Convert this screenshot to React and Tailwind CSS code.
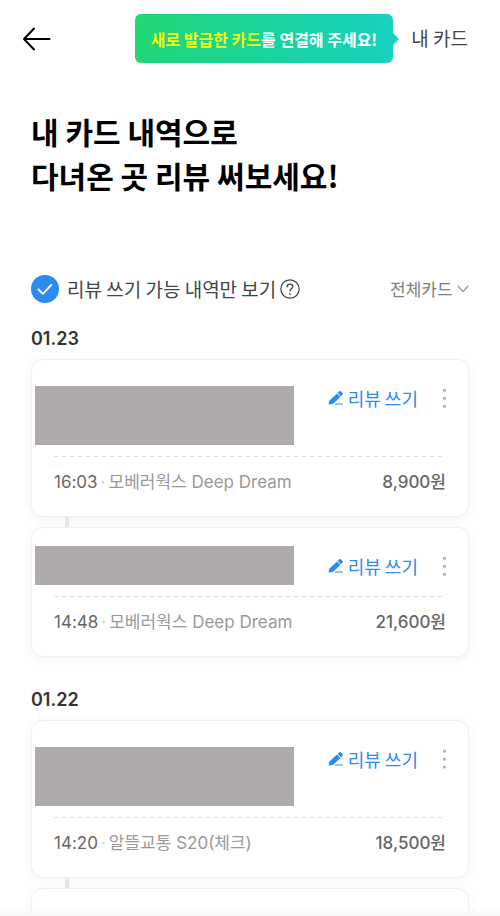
const groups = [
  {
    date: '01.23',
    items: [
      { time: '16:03', source: '모베러웍스 Deep Dream', amount: '8,900', tall: true },
      { time: '14:48', source: '모베러웍스 Deep Dream', amount: '21,600', tall: false },
    ],
  },
  {
    date: '01.22',
    items: [
      { time: '14:20', source: '알뜰교통 S20(체크)', amount: '18,500', tall: true },
      { time: '', source: '', amount: '', tall: true },
    ],
  },
];

const Header = () => (
  <header className="flex items-center justify-between pt-[14px] pl-[22px] pr-8">
    <button type="button" aria-label="뒤로" className="p-0">
      <svg width="29" height="24" viewBox="0 0 29 24" fill="none" stroke="#000" strokeWidth="2" strokeLinecap="round" strokeLinejoin="round">
        <path d="M27.5 12H2M12 1.5L2 12l10 10.5" />
      </svg>
    </button>
    <div className="flex items-center">
      <p className="flex h-[49px] items-center rounded-md bg-linear-to-r from-[#21d673] to-[#17d1bf] px-4 text-[16px] font-bold text-white">
        <span><span className="text-[#f3fb12]">새로 발급한 카드</span>를 연결해 주세요!</span>
      </p>
      <svg width="6" height="12" viewBox="0 0 6 12" fill="#17cfd0">
        <path d="M0 0l6 6-6 6z" />
      </svg>
      <a href="#cards" className="ml-3 text-[19px] text-[#444]">내 카드</a>
    </div>
  </header>
);

const Filters = () => (
  <div className="mt-[78px] flex items-center justify-between">
    <div className="flex items-center">
      <label className="flex items-center gap-2 text-[19px] leading-7 text-[#444]">
        <span className="relative flex size-7">
          <input type="checkbox" defaultChecked className="size-7 appearance-none rounded-full bg-[#ccc] checked:bg-[#2b8cee]" />
          <svg className="pointer-events-none absolute inset-0" width="28" height="28" viewBox="0 0 28 28" fill="none" stroke="#fff" strokeWidth="2" strokeLinecap="round" strokeLinejoin="round">
            <path d="M7.5 14.5l4.4 4.4 8.4-9" />
          </svg>
        </span>
        리뷰 쓰기 가능 내역만 보기
      </label>
      <button type="button" aria-label="도움말" className="ml-1">
        <svg width="20" height="20" viewBox="0 0 20 20" fill="none" stroke="#444" strokeLinecap="round">
          <circle cx="10" cy="10" r="9.2" strokeWidth="1.2" />
          <path d="M7.2 7.8c0-1.7 1.2-2.7 2.8-2.7s2.8 1 2.8 2.5c0 2.1-2.8 2.2-2.8 4.5" strokeWidth="1.4" />
          <circle cx="10" cy="14.9" r="0.9" fill="#444" stroke="none" />
        </svg>
      </button>
    </div>
    <div className="flex items-center gap-1">
      <select aria-label="카드 선택" className="appearance-none bg-transparent text-[17px] text-[#808080]">
        <option>전체카드</option>
      </select>
      <svg className="pointer-events-none" width="12" height="8" viewBox="0 0 12 8" fill="none" stroke="#999" strokeWidth="1.2" strokeLinecap="round">
        <path d="M1 1l5 5.5L11 1" />
      </svg>
    </div>
  </div>
);

const PencilIcon = () => (
  <svg width="16" height="16" viewBox="0 0 16 16" fill="#2b8cee">
    <path d="M1.2 14.6c-.4 0-.6-.3-.5-.6l.4-2.7c0-.3.2-.6.4-.8L8.9 3.6l3.5 3.5-6.9 6.5c-.3.3-.6.5-1 .5z" />
    <path d="M9.6 2.9l1.2-1.2c.8-.8 1.8-.8 2.6 0l.8.8c.8.8.8 1.8 0 2.6L13 6.4z" />
    <path d="M7.5 13.6H15v1H6.5z" />
  </svg>
);

const HistoryCard = ({ item }) => (
  <article className="rounded-xl border border-[#ecf0f1] bg-white shadow-[0_2px_10px_rgba(30,60,60,0.06)]">
    <div className={`flex items-start justify-between pl-[3px] pr-5 ${item.tall ? 'h-24 pt-[26px]' : 'h-[68px] pt-[18px]'}`}>
      {item.time ? (
        <>
          <div className={`w-[259px] bg-[#afabaa] ${item.tall ? 'h-[59px]' : 'h-[39px]'}`} />
          <div className={`flex items-center gap-6 ${item.tall ? '' : 'mt-2'}`}>
            <button type="button" className="flex items-center gap-1 text-[18px] leading-6 text-[#2b8cee]">
              <PencilIcon />
              리뷰 쓰기
            </button>
            <button type="button" aria-label="더보기">
              <svg width="6" height="20" viewBox="0 0 6 20" fill="#b5b5b5">
                <path d="M1 1h3v2.5H1zM1 9h3v2.5H1zM1 17h3v2.5H1z" />
              </svg>
            </button>
          </div>
        </>
      ) : null}
    </div>
    <div className="px-[22px]">
      <svg className="block w-full" height="1">
        <line x1="0" y1="0.5" x2="100%" y2="0.5" stroke="#dcdcdc" strokeDasharray="4 4" />
      </svg>
      <div className="flex h-[59px] items-center justify-between pb-[7px] font-[Inter,'Noto_Sans_CJK_KR',sans-serif] text-[17px]">
        <p className="text-[#999]">
          <span className="text-[#666]">{item.time}</span>
          {item.time ? <span className="mx-[3px] text-[#ccc]">·</span> : null}
          {item.source}
        </p>
        <p className="font-medium text-[#666]">{item.amount}{item.amount ? '원' : ''}</p>
      </div>
    </div>
  </article>
);

const App = () => (
  <div className="relative h-screen overflow-hidden bg-white font-['Noto_Sans_CJK_KR',sans-serif]">
    <div className="h-full overflow-y-auto [scrollbar-width:none]">
      <Header />
      <main className="px-[31px]">
        <h1 className="mt-[46px] text-[30px] leading-[44px] font-bold text-black">
          내 카드 내역으로
          <br />
          다녀온 곳 리뷰 써보세요!
        </h1>
        <Filters />
        {groups.map((group, index) => (
          <section key={group.date} className={index === 0 ? 'mt-[22px]' : 'mt-[29px]'}>
            <h2 className="font-[Inter,sans-serif] text-[18px] leading-7 font-semibold text-[#333]">{group.date}</h2>
            <ul className="mt-[6px]">
              {group.items.map((item, i) => (
                <li key={i}>
                  {i > 0 ? <div className="ml-[34px] h-[10px] w-1 bg-[#e4e8eb]" /> : null}
                  <HistoryCard item={item} />
                </li>
              ))}
            </ul>
          </section>
        ))}
      </main>
    </div>
    <div className="pointer-events-none absolute inset-x-0 bottom-0 h-2 bg-linear-to-b from-transparent to-[#f6f8f8]" />
  </div>
);

export default App;
